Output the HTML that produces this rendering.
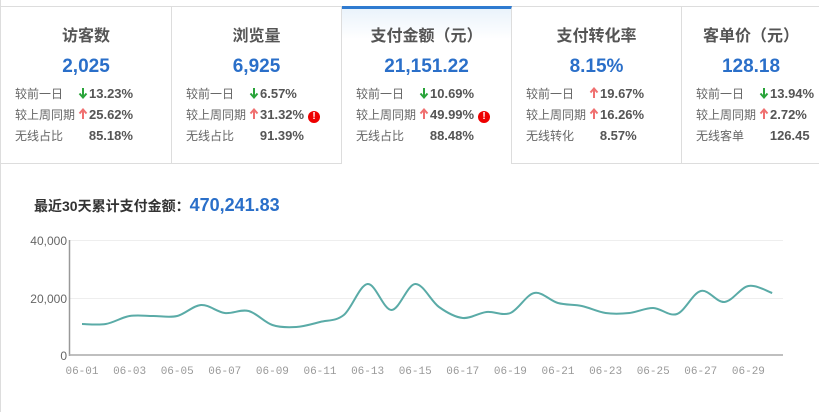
<!DOCTYPE html>
<html><head><meta charset="utf-8"><style>
*{margin:0;padding:0;box-sizing:border-box}
body{width:819px;height:412px;background:#fff;font-family:"Liberation Sans","Noto Sans CJK SC",sans-serif;position:relative;overflow:hidden;border-left:1px solid #ddd}
.card{position:absolute;top:6px;height:158px;border-top:1px solid #ddd;border-bottom:1px solid #ddd;border-right:1px solid #ddd}
.card.act{border-top:3px solid #2f7bd0;border-bottom:none;background:linear-gradient(#eaf3fb,#fff 30px)}
.t{position:absolute;top:15px;left:0;right:0;text-align:center;font-size:16px;color:#555;font-weight:bold}
.v{position:absolute;top:49px;left:0;right:0;text-align:center;font-size:19px;color:#2a6fc9;font-weight:bold}
.r{position:absolute;left:14px;font-size:12px;color:#666;white-space:nowrap;height:16px;line-height:16px}
.r b{position:absolute;left:63px;top:0;color:#555;font-size:13px}
.a{display:inline-block;width:10px;height:12px;vertical-align:-1px;margin-right:1px}
.ex{display:inline-block;width:12px;height:12px;border-radius:50%;background:#e00;color:#fff;font-size:10px;text-align:center;line-height:12px;margin-left:4px;vertical-align:0px}
</style></head><body>
<svg width="0" height="0" style="position:absolute"><defs>
<symbol id="dn" viewBox="0 0 10 12"><path d="M5 1V10M1.5 6.5L5 10.5 8.5 6.5" stroke="#2aa43a" stroke-width="2" fill="none"/></symbol>
<symbol id="up" viewBox="0 0 10 12"><path d="M5 11V2M1.5 5.5L5 1.5 8.5 5.5" stroke="#f07070" stroke-width="2" fill="none"/></symbol>
</defs></svg>
<div class="card" style="left:0;width:171px"><div class="t">访客数</div><div class="v">2,025</div>
<div class="r" style="top:79px">较前一日<b><svg class="a"><use href="#dn"/></svg>13.23%</b></div>
<div class="r" style="top:100px">较上周同期<b><svg class="a"><use href="#up"/></svg>25.62%</b></div>
<div class="r" style="top:121px">无线占比<b>&nbsp;&nbsp;&nbsp;85.18%</b></div></div>
<div class="card" style="left:171px;width:170px"><div class="t">浏览量</div><div class="v">6,925</div>
<div class="r" style="top:79px">较前一日<b><svg class="a"><use href="#dn"/></svg>6.57%</b></div>
<div class="r" style="top:100px">较上周同期<b><svg class="a"><use href="#up"/></svg>31.32%<span class="ex">!</span></b></div>
<div class="r" style="top:121px">无线占比<b>&nbsp;&nbsp;&nbsp;91.39%</b></div></div>
<div class="card act" style="left:341px;width:170px;top:6px"><div class="t" style="top:13px">支付金额（元）</div><div class="v" style="top:47px">21,151.22</div>
<div class="r" style="top:77px">较前一日<b><svg class="a"><use href="#dn"/></svg>10.69%</b></div>
<div class="r" style="top:98px">较上周同期<b><svg class="a"><use href="#up"/></svg>49.99%<span class="ex">!</span></b></div>
<div class="r" style="top:119px">无线占比<b>&nbsp;&nbsp;&nbsp;88.48%</b></div></div>
<div class="card" style="left:511px;width:170px"><div class="t">支付转化率</div><div class="v">8.15%</div>
<div class="r" style="top:79px">较前一日<b><svg class="a"><use href="#up"/></svg>19.67%</b></div>
<div class="r" style="top:100px">较上周同期<b><svg class="a"><use href="#up"/></svg>16.26%</b></div>
<div class="r" style="top:121px">无线转化<b>&nbsp;&nbsp;&nbsp;8.57%</b></div></div>
<div class="card" style="left:681px;width:150px"><div class="t" style="width:138px">客单价（元）</div><div class="v" style="width:138px">128.18</div>
<div class="r" style="top:79px">较前一日<b><svg class="a"><use href="#dn"/></svg>13.94%</b></div>
<div class="r" style="top:100px">较上周同期<b><svg class="a"><use href="#up"/></svg>2.72%</b></div>
<div class="r" style="top:121px">无线客单<b>&nbsp;&nbsp;&nbsp;126.45</b></div></div>
<div style="position:absolute;left:33px;top:195px;font-size:14px;font-weight:bold;color:#333;font-family:'Liberation Sans','Noto Sans CJK SC',sans-serif">最近30天累计支付金额：<span style="color:#2a6fc9;font-size:18px">470,241.83</span></div>
<svg width="819" height="412" style="position:absolute;left:0;top:0">
<line x1="68" y1="240.5" x2="782" y2="240.5" stroke="#eee"/>
<line x1="68" y1="298.5" x2="782" y2="298.5" stroke="#eee"/>
<line x1="68.5" y1="240" x2="68.5" y2="356" stroke="#999" stroke-width="1.5"/>
<line x1="68" y1="355" x2="782" y2="355" stroke="#aaa" stroke-width="1.5"/>
<g font-size="12" fill="#666" text-anchor="end" font-family="Liberation Sans,sans-serif">
<text x="66" y="245">40,000</text><text x="66" y="303">20,000</text><text x="66" y="360">0</text></g>
<g id="xl" font-size="11" fill="#999" text-anchor="middle" font-family="Liberation Mono,monospace"></g>
<path id="ln" fill="none" stroke="#5aaba7" stroke-width="2"/>
</svg>
<script>
var ys=[324,324,316,316,316,305,313,311,325,327,322,315,284,310,284,307,318,312,313,293,303,306,313,313,308,314,291,302,286,293];
var p=ys.map(function(y,i){return [81+i*23.8,y]});
var d="M"+p[0];
for(var i=0;i<p.length-1;i++){var a=p[i-1]||p[i],b=p[i],c=p[i+1],e=p[i+2]||c;
d+=" C"+(b[0]+(c[0]-a[0])/6)+","+(b[1]+(c[1]-a[1])/6)+" "+(c[0]-(e[0]-b[0])/6)+","+(c[1]-(e[1]-b[1])/6)+" "+c;}
document.getElementById('ln').setAttribute('d',d);
var g=document.getElementById('xl'),s="";
for(var k=1;k<=29;k+=2){s+='<text x="'+(81+(k-1)*23.8)+'" y="374">06-'+(k<10?"0"+k:k)+'</text>';}
g.innerHTML=s;
</script>
</body></html>
